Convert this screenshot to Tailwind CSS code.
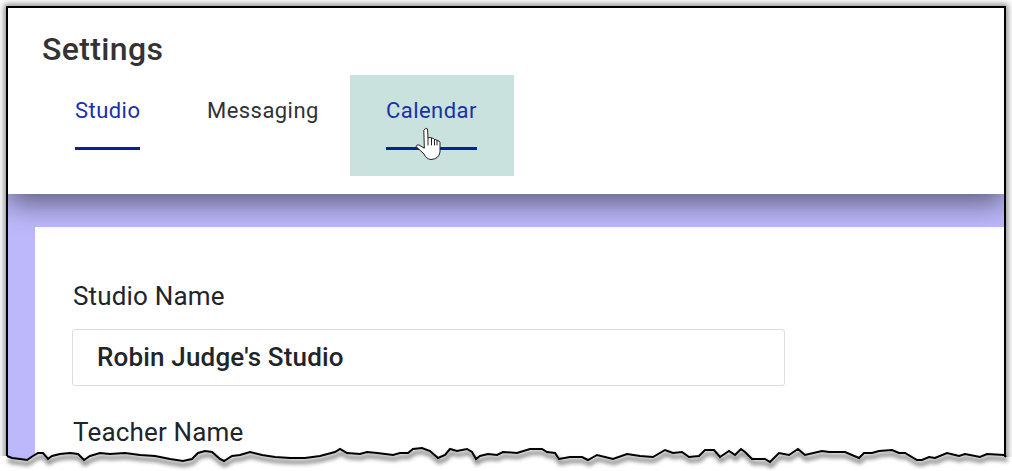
<!DOCTYPE html>
<html lang="en">
  <head>
    <meta charset="UTF-8" />
    <meta name="viewport" content="width=device-width, initial-scale=1.0" />
    <title>Settings</title>
    <script src="https://cdn.jsdelivr.net/npm/@tailwindcss/browser@4"></script>
  </head>
  <body class="relative w-[1012px] h-[471px] overflow-hidden bg-white font-['Roboto',sans-serif]">
    <div class="ml-[6px] mt-[6px] w-[1000px] h-[460px] border-2 border-black bg-[#bcb8fb] overflow-hidden shadow-[0_0_6px_2px_rgba(0,0,0,0.45)]">
      <header class="relative z-10 h-[186px] bg-white pl-[34px] pt-[23px] shadow-[0_10px_26px_rgba(0,0,0,0.48)]">
        <h1 class="text-[32px] leading-[36px] font-medium tracking-[0.35px] text-[#333333]">Settings</h1>
        <nav class="flex gap-[67px] pl-[33px] mt-[8px] text-[22px] tracking-[0.45px]">
          <a class="block w-[65px] h-[101px] pt-[20px] text-[#1a2fa8]">
            <span class="block h-[55px] leading-[32px] border-b-[3px] border-[#0a1f9e]">Studio</span>
          </a>
          <a class="block w-[112px] h-[101px] pt-[20px] text-[#2f3136]">
            <span class="block h-[55px] leading-[32px]">Messaging</span>
          </a>
          <a class="block w-[164px] h-[101px] pt-[20px] -ml-[36px] pl-[36px] pr-[37px] bg-[#c9e2dd] text-[#1a2fa8]">
            <span class="block h-[55px] leading-[32px] border-b-[3px] border-[#0a1f9e]">Calendar</span>
          </a>
        </nav>
      </header>
      <main class="pl-[27px] pt-[33px]">
        <section class="h-[300px] bg-white pl-[37px] pt-[52px]">
          <label class="block pl-px text-[26px] leading-[34px] tracking-[0.17px] text-[#212529]">Studio Name</label>
          <div class="mt-[16px] flex items-center w-[713px] h-[57px] pl-[24px] border border-[#dddddd] rounded-[3px] text-[26px] font-medium tracking-[0.17px] text-[#212529]">Robin Judge's Studio</div>
          <label class="block pl-px mt-[29px] text-[26px] leading-[34px] tracking-[0.17px] text-[#212529]">Teacher Name</label>
        </section>
      </main>
    </div>

    <!-- torn bottom edge, lies over the frame -->
    <svg class="absolute z-20 left-0 top-0" width="1012" height="471" viewBox="0 0 1012 471" fill="none">
      <path fill="#ffffff" d="M0 456L7 456L12 458L20 459L27 460L33 456L38 453L43 453L48 459L52 456L60 454L70 453L78 454L84 460L90 456L100 453L110 454L125 453L140 455L155 456L170 459L183 461L192 459L198 453L205 451L212 452L220 459L224 461L232 456L240 455L250 452L262 455L275 457L290 458L305 458L320 456L335 452L340 449L347 453L360 454L367 452L377 453L393 455L400 453L408 453L413 449L422 448L430 451L438 458L445 455L450 449L457 451L467 449L472 452L476 459L480 456L488 454L497 455L503 452L517 453L530 449L542 449L547 452L555 453L559 459L570 457L582 457L588 460L597 455L613 459L627 454L640 456L653 457L665 450L673 453L682 452L689 457L699 456L705 450L714 450L720 457L729 451L735 455L741 449L745 452L752 459L765 459L770 462L779 453L789 455L798 449L805 455L822 451L829 452L845 452L859 458L864 453L872 453L879 451L892 450L899 453L905 453L917 460L922 460L929 457L935 458L947 453L959 456L965 454L980 457L987 454L1004 455L1006 457L1012 457L1012 471L0 471Z" />
      <path class="blur-[2px]" transform="translate(1 4)" stroke="#000000" stroke-opacity="0.6" stroke-width="3" d="M7 456L12 458L20 459L27 460L33 456L38 453L43 453L48 459L52 456L60 454L70 453L78 454L84 460L90 456L100 453L110 454L125 453L140 455L155 456L170 459L183 461L192 459L198 453L205 451L212 452L220 459L224 461L232 456L240 455L250 452L262 455L275 457L290 458L305 458L320 456L335 452L340 449L347 453L360 454L367 452L377 453L393 455L400 453L408 453L413 449L422 448L430 451L438 458L445 455L450 449L457 451L467 449L472 452L476 459L480 456L488 454L497 455L503 452L517 453L530 449L542 449L547 452L555 453L559 459L570 457L582 457L588 460L597 455L613 459L627 454L640 456L653 457L665 450L673 453L682 452L689 457L699 456L705 450L714 450L720 457L729 451L735 455L741 449L745 452L752 459L765 459L770 462L779 453L789 455L798 449L805 455L822 451L829 452L845 452L859 458L864 453L872 453L879 451L892 450L899 453L905 453L917 460L922 460L929 457L935 458L947 453L959 456L965 454L980 457L987 454L1004 455L1006 457" />
      <path stroke="#000000" stroke-width="2" d="M7 456L12 458L20 459L27 460L33 456L38 453L43 453L48 459L52 456L60 454L70 453L78 454L84 460L90 456L100 453L110 454L125 453L140 455L155 456L170 459L183 461L192 459L198 453L205 451L212 452L220 459L224 461L232 456L240 455L250 452L262 455L275 457L290 458L305 458L320 456L335 452L340 449L347 453L360 454L367 452L377 453L393 455L400 453L408 453L413 449L422 448L430 451L438 458L445 455L450 449L457 451L467 449L472 452L476 459L480 456L488 454L497 455L503 452L517 453L530 449L542 449L547 452L555 453L559 459L570 457L582 457L588 460L597 455L613 459L627 454L640 456L653 457L665 450L673 453L682 452L689 457L699 456L705 450L714 450L720 457L729 451L735 455L741 449L745 452L752 459L765 459L770 462L779 453L789 455L798 449L805 455L822 451L829 452L845 452L859 458L864 453L872 453L879 451L892 450L899 453L905 453L917 460L922 460L929 457L935 458L947 453L959 456L965 454L980 457L987 454L1004 455L1006 457" />
    </svg>

    <!-- hand cursor -->
    <svg class="absolute z-30 left-[414px] top-[126px]" width="28" height="36" viewBox="414 126 28 36" fill="#ffffff" stroke="#222222" stroke-width="1" stroke-linejoin="round" stroke-linecap="round">
      <path d="M424 130Q425.5 127 427.5 129L428 138Q430 137 431.5 138Q433.5 138 434.5 139.5Q436 139 437 140.5Q439.5 140.5 440 142.5L440 152Q439 159 431 159.5Q426 159 424 154L416 146.5Q417 144 419 145L424 148Z" />
      <path fill="none" d="M428 138L428 145M431.5 138L431.5 145M434.5 139.5L434.5 145M437 140.5L437 145" />
    </svg>
  </body>
</html>
